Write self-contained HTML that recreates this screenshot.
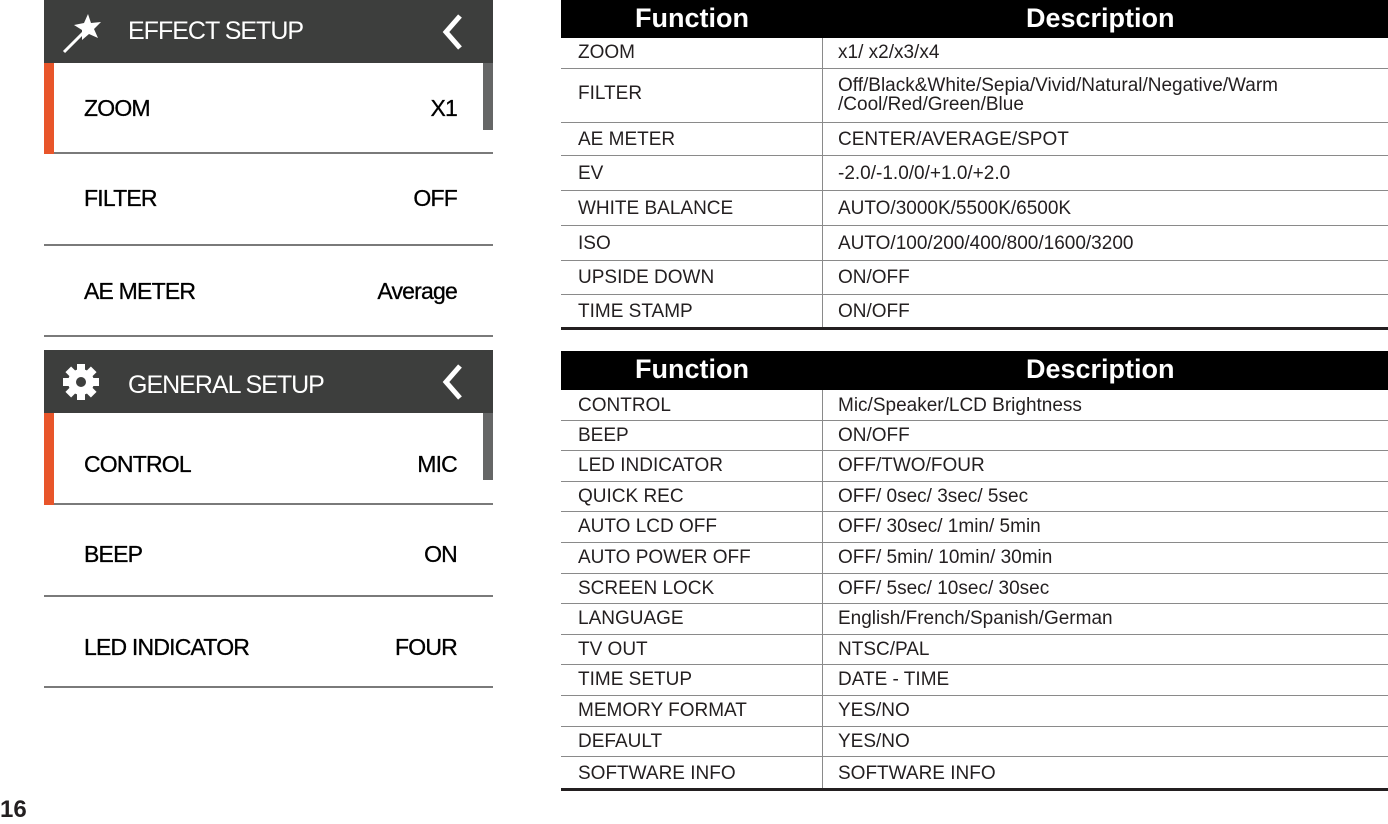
<!DOCTYPE html>
<html><head><meta charset="utf-8"><style>
body{margin:0;width:1388px;height:821px;background:#fff;position:relative;overflow:hidden;font-family:"Liberation Sans",sans-serif}
.a{position:absolute}
.hd{position:absolute;left:44px;width:449px;height:63px;background:#3d3e3d;color:#fff;font-size:25px;letter-spacing:-1px}
.hd span{position:absolute;left:84px;top:17px}
.row{position:absolute;left:44px;width:449px;border-bottom:2px solid #7a7a7a;font-size:23px;letter-spacing:-0.8px;color:#000;-webkit-text-stroke:0.3px #000}
.row .l{position:absolute;left:40px}.row .r{position:absolute;right:36px}
.t{position:absolute;left:561px;width:827px;font-size:19px;color:#231f20}
.t .h{background:#000;color:#fff;font-weight:bold;font-size:27px;position:relative}
.t .r2{position:relative;border-bottom:1px solid #8a8a8a}
.t .c1{position:absolute;left:17px}.t .c2{position:absolute;left:277px}
.t .v{position:absolute;left:261px;top:0;bottom:0;width:1px;background:#8a8a8a}
</style></head><body>
<div class="hd" style="top:0"><svg class="a" style="left:16px;top:12px" width="46" height="42" viewBox="0 0 46 42"><path d="M4 40 L24 20" stroke="#fff" stroke-width="3"/><path d="M28 2 L31 11 L41 10 L34 17 L38 26 L29 22 L22 28 L22 18 L14 13 L24 11 Z" fill="#fff"/></svg><span>EFFECT SETUP</span><svg class="a" style="left:396px;top:13px" width="26" height="38"><path d="M20 3 L6 19 L20 35" stroke="#fff" stroke-width="5" fill="none"/></svg></div>
<div class="row" style="top:63px;height:89px"><div class="a" style="left:0;top:0;width:10px;height:91px;background:#e8552a"></div><span class="l" style="top:32px">ZOOM</span><span class="r" style="top:32px">X1</span><div class="a" style="left:439px;top:0;width:10px;height:67px;background:#656666"></div></div>
<div class="row" style="top:155px;height:89px"><span class="l" style="top:30px">FILTER</span><span class="r" style="top:30px">OFF</span></div>
<div class="row" style="top:246px;height:89px"><span class="l" style="top:32px">AE METER</span><span class="r" style="top:32px">Average</span></div>
<div class="hd" style="top:350px"><svg class="a" style="left:18px;top:14px" width="38" height="36" viewBox="-18 -18 36 36"><g fill="#fff"><circle r="13"/><g id="k"><rect x="-4" y="-18" width="8" height="36"/></g><use href="#k" transform="rotate(45)"/><use href="#k" transform="rotate(90)"/><use href="#k" transform="rotate(135)"/></g><circle r="5" fill="#3d3e3d"/></svg><span style="top:21px">GENERAL SETUP</span><svg class="a" style="left:396px;top:13px" width="26" height="38"><path d="M20 3 L6 19 L20 35" stroke="#fff" stroke-width="5" fill="none"/></svg></div>
<div class="row" style="top:413px;height:90px"><div class="a" style="left:0;top:0;width:10px;height:92px;background:#e8552a"></div><span class="l" style="top:38px">CONTROL</span><span class="r" style="top:38px">MIC</span><div class="a" style="left:439px;top:0;width:10px;height:67px;background:#656666"></div></div>
<div class="row" style="top:505px;height:90px"><span class="l" style="top:36px">BEEP</span><span class="r" style="top:36px">ON</span></div>
<div class="row" style="top:597px;height:89px"><span class="l" style="top:37px">LED INDICATOR</span><span class="r" style="top:37px">FOUR</span></div>
<div class="a" style="left:0;top:796px;font-size:24px;font-weight:bold;color:#231f20">16</div>

<div class="t" style="top:0">
<div class="h" style="height:38px"><span class="a" style="left:74px;top:3px">Function</span><span class="a" style="left:465px;top:3px">Description</span></div>
<div class="r2" style="height:30px"><div class="v"></div><span class="c1" style="top:4px">ZOOM</span><span class="c2" style="top:4px">x1/ x2/x3/x4</span></div>
<div class="r2" style="height:53px"><div class="v"></div><span class="c1" style="top:14px">FILTER</span><span class="c2" style="top:7px;line-height:19px">Off/Black&amp;White/Sepia/Vivid/Natural/Negative/Warm<br>/Cool/Red/Green/Blue</span></div>
<div class="r2" style="height:32px"><div class="v"></div><span class="c1" style="top:6px">AE METER</span><span class="c2" style="top:6px">CENTER/AVERAGE/SPOT</span></div>
<div class="r2" style="height:34px"><div class="v"></div><span class="c1" style="top:7px">EV</span><span class="c2" style="top:7px">-2.0/-1.0/0/+1.0/+2.0</span></div>
<div class="r2" style="height:34px"><div class="v"></div><span class="c1" style="top:7px">WHITE BALANCE</span><span class="c2" style="top:7px">AUTO/3000K/5500K/6500K</span></div>
<div class="r2" style="height:34px"><div class="v"></div><span class="c1" style="top:7px">ISO</span><span class="c2" style="top:7px">AUTO/100/200/400/800/1600/3200</span></div>
<div class="r2" style="height:33px"><div class="v"></div><span class="c1" style="top:6px">UPSIDE DOWN</span><span class="c2" style="top:6px">ON/OFF</span></div>
<div class="r2" style="height:32px;border-bottom:3px solid #231f20"><div class="v"></div><span class="c1" style="top:6px">TIME STAMP</span><span class="c2" style="top:6px">ON/OFF</span></div>
</div>

<div class="t" style="top:351px">
<div class="h" style="height:39px"><span class="a" style="left:74px;top:3px">Function</span><span class="a" style="left:465px;top:3px">Description</span></div>
<div class="r2" style="height:29.6px"><div class="v"></div><span class="c1" style="top:5px">CONTROL</span><span class="c2" style="top:5px">Mic/Speaker/LCD Brightness</span></div>
<div class="r2" style="height:29.6px"><div class="v"></div><span class="c1" style="top:4px">BEEP</span><span class="c2" style="top:4px">ON/OFF</span></div>
<div class="r2" style="height:29.6px"><div class="v"></div><span class="c1" style="top:4px">LED INDICATOR</span><span class="c2" style="top:4px">OFF/TWO/FOUR</span></div>
<div class="r2" style="height:29.6px"><div class="v"></div><span class="c1" style="top:4px">QUICK REC</span><span class="c2" style="top:4px">OFF/ 0sec/ 3sec/ 5sec</span></div>
<div class="r2" style="height:29.6px"><div class="v"></div><span class="c1" style="top:4px">AUTO LCD OFF</span><span class="c2" style="top:4px">OFF/ 30sec/ 1min/ 5min</span></div>
<div class="r2" style="height:29.6px"><div class="v"></div><span class="c1" style="top:4px">AUTO POWER OFF</span><span class="c2" style="top:4px">OFF/ 5min/ 10min/ 30min</span></div>
<div class="r2" style="height:29.6px"><div class="v"></div><span class="c1" style="top:4px">SCREEN LOCK</span><span class="c2" style="top:4px">OFF/ 5sec/ 10sec/ 30sec</span></div>
<div class="r2" style="height:29.6px"><div class="v"></div><span class="c1" style="top:4px">LANGUAGE</span><span class="c2" style="top:4px">English/French/Spanish/German</span></div>
<div class="r2" style="height:29.6px"><div class="v"></div><span class="c1" style="top:4px">TV OUT</span><span class="c2" style="top:4px">NTSC/PAL</span></div>
<div class="r2" style="height:29.6px"><div class="v"></div><span class="c1" style="top:4px">TIME SETUP</span><span class="c2" style="top:4px">DATE - TIME</span></div>
<div class="r2" style="height:29.6px"><div class="v"></div><span class="c1" style="top:4px">MEMORY FORMAT</span><span class="c2" style="top:4px">YES/NO</span></div>
<div class="r2" style="height:29.6px"><div class="v"></div><span class="c1" style="top:4px">DEFAULT</span><span class="c2" style="top:4px">YES/NO</span></div>
<div class="r2" style="height:31px;border-bottom:3px solid #231f20"><div class="v"></div><span class="c1" style="top:6px">SOFTWARE INFO</span><span class="c2" style="top:6px">SOFTWARE INFO</span></div>
</div>
</body></html>
